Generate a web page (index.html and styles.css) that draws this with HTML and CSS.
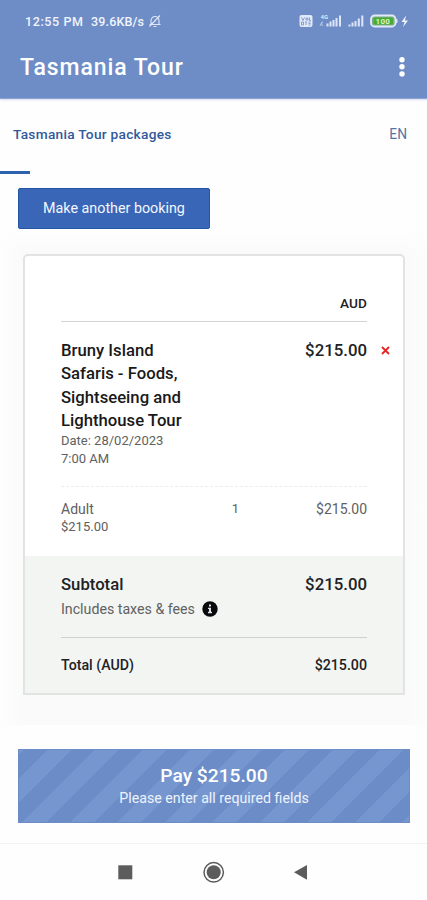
FILE: index.html
```
<!DOCTYPE html>
<html lang="en">
<head>
<meta charset="utf-8">
<meta name="viewport" content="width=device-width, initial-scale=1">
<title>Tasmania Tour</title>
<link rel="stylesheet" href="styles.css">
</head>
<body>
<header class="top">
  <div class="status">
    <span class="clock">12:55 PM</span>
    <span class="speed">39.6KB/s</span>
    <svg class="bell" width="14" height="14" viewBox="0 0 14 14" fill="none" stroke="#dfe7f7" stroke-width="1.1"><path d="M3 10.5V7c0-6 8-6 8 0v3.500M1.500 10.500h11M5.500 12.500h3M1.500 12.500L12 1.500"/></svg>
    <svg class="indicators" width="110" height="14" viewBox="0 0 110 14">
      <rect x="0.500" y="1" width="13" height="12" rx="2" fill="#e1e9f8"/>
      <path d="M2.500 3.500l1.500 3 1.500-3M7 4h2v2H7zM10.500 3.500v3h1.500M2.500 8h2v3h-2zM6 8h2M7 8v3M9.500 8h2M9.500 9.500h2M9.500 11h2" fill="none" stroke="#7a96cd" stroke-width=".9"/>
      <text x="21.500" y="4.500" class="net">4G</text>
      <path d="M21 12l1.500-3 1 3M22 9l2-1" fill="none" stroke="#b9caec" stroke-width="1"/>
      <path d="M28.500 12.500v-3M31.500 12.500v-5M34.500 12.500V6M37.500 12.500V4M41 12.500V1.500M50.500 12.500v-2M53.500 12.500v-4M56.500 12.500V7M59.800 12.500V4.500M63.300 12.500V1.500" stroke="#dce6f8" stroke-width="2"/>
      <path d="M96.500 4.500l2 1v3l-2 1z" fill="#dce6f8"/>
      <rect x="72" y="1.500" width="24.500" height="11" rx="3.500" fill="#7fac8c" stroke="#e1eafa" stroke-width="1.800"/>
      <rect x="74.500" y="3.500" width="19.500" height="7" rx="1.500" fill="#48ac32"/>
      <text x="76.500" y="10" class="charge">100</text>
      <path d="M107 1.500L102.500 8h3l-1.500 5 5-6.500h-3z" fill="#eef3fd"/>
    </svg>
  </div>
  <div class="appbar">
    <h1>Tasmania Tour</h1>
    <svg width="8" height="22" viewBox="0 0 8 22" fill="#fff"><circle cx="4" cy="2.700" r="2.700"/><circle cx="4" cy="9.800" r="2.700"/><circle cx="4" cy="16.900" r="2.700"/></svg>
  </div>
</header>
<nav class="nav">
  <span class="brand">Tasmania Tour packages</span>
  <span class="lang">EN</span>
</nav>
<div class="marker"></div>
<main>
  <button class="again">Make another booking</button>
  <div class="shade">
    <section class="card">
      <div class="items">
        <div class="currency"><span>AUD</span></div>
        <div class="tour">
          <div>
            <h2>Bruny Island<br>Safaris - Foods,<br>Sightseeing and<br>Lighthouse Tour</h2>
            <p class="date">Date: 28/02/2023</p>
            <p class="time">7:00 AM</p>
          </div>
          <strong class="price">$215.00</strong>
          <svg class="remove" width="9" height="9" viewBox="0 0 9 9" stroke="#e32626" stroke-width="1.800"><path d="M1 1l7 7M8 1L1 8"/></svg>
        </div>
        <div class="guest">
          <div><p class="adult">Adult</p><p class="each">$215.00</p></div>
          <span class="count">1</span>
          <span class="amount">$215.00</span>
        </div>
      </div>
      <div class="totals">
        <div class="row"><strong class="subtotal">Subtotal</strong><strong class="price">$215.00</strong></div>
        <div class="taxes"><span>Includes taxes &amp; fees</span>
          <svg width="16" height="16" viewBox="0 0 16 16"><circle cx="8" cy="8" r="7.700" fill="#070b0d"/><path d="M7 3.500h2v2H7zM6 6.700h3v4h1v1.500H6v-1.500h1V8.100H6z" fill="#dfe2e2"/></svg>
        </div>
        <div class="row total"><strong class="total-label">Total (AUD)</strong><strong class="sum">$215.00</strong></div>
      </div>
    </section>
  </div>
  <div class="pay">
    <strong>Pay $215.00</strong>
    <span>Please enter all required fields</span>
  </div>
</main>
<footer class="softkeys">
  <svg width="427" height="56" viewBox="0 0 427 56" fill="#5c5c5c"><rect x="118.300" y="21.300" width="14" height="14"/><circle cx="213.700" cy="28.300" r="9.700" fill="none" stroke="#5c5c5c" stroke-width="1.500"/><circle cx="213.700" cy="28.300" r="7"/><path d="M294 28.300L307 21v14.800z"/></svg>
</footer>
</body>
</html>
```
FILE: styles.css
```
* { box-sizing: border-box; }
body { margin: 0; width: 427px; height: 900px; background: #fefefe; font-family: Roboto, "Liberation Sans", sans-serif; color: #202124; overflow: hidden; display: flex; flex-direction: column; }
h1, h2, p { margin: 0; }
strong { font-weight: 500; }
span, strong { white-space: nowrap; }
.top { height: 99px; flex: none; background: #6e8dc7; color: #fff; border-bottom: 1px solid #8ba3d1; box-shadow: 0 1px 2px #d5dced; }
.status { height: 42px; padding: 0 18px 0 25px; display: flex; align-items: center; font-size: 12.5px; font-weight: 500; color: #f0f4fd; }
.clock { letter-spacing: .6px; width: 66px; }
.speed { letter-spacing: .15px; width: 57px; }
.indicators { margin-left: auto; }
.net { font-size: 6px; font-weight: 700; fill: #dce6f8; }
.charge { font-size: 8px; font-weight: 700; fill: #d8f5cd; letter-spacing: .3px; }
.appbar { height: 52px; padding: 0 21px 0 20px; display: flex; align-items: center; justify-content: space-between; }
h1 { font-size: 23px; line-height: 28px; font-weight: 500; letter-spacing: .92px; }
.nav { height: 72px; flex: none; padding: 0 20px 2px 13px; display: flex; align-items: center; justify-content: space-between; color: #31599c; }
.brand { font-size: 13.7px; font-weight: 500; letter-spacing: .27px; }
.lang { font-size: 13.8px; color: #5474a9; }
.marker { width: 30px; height: 3px; flex: none; background: #2c62ae; }
main { flex: none; height: 669px; display: flex; flex-direction: column; align-items: flex-start; padding: 14px 0 0; }
.again { margin-left: 18px; width: 192px; height: 41px; flex: none; border: 1px solid #2456a2; border-radius: 2px; padding: 0 0 2px; background: #3966b6; color: #f4f7fe; font: 400 14.3px Roboto, sans-serif; }
.shade { width: 427px; flex: none; height: 496px; padding: 25px 22px 31px 23px; background: linear-gradient(180deg, #fefefe, transparent 25px), linear-gradient(90deg, #fefefe, #fafafa 23px, #fafafa 404px, #fdfdfd); }
.card { width: 382px; height: 441px; background: #fff; border: 2px solid #e2e3e3; border-radius: 5px 5px 0 0; display: flex; flex-direction: column; }
.items { height: 300px; padding: 36px 36px 0; }
.currency { height: 30px; border-bottom: 1px solid #d4d4d4; text-align: right; font-size: 13.6px; letter-spacing: .1px; line-height: 23px; font-weight: 500; }
.tour { position: relative; display: flex; justify-content: space-between; height: 165px; padding-top: 17px; border-bottom: 1px dashed #ececec; }
h2 { font-size: 16.7px; line-height: 23.3px; font-weight: 500; color: #191919; }
.price { font-size: 16.8px; line-height: 23px; }
.remove { position: absolute; right: -23px; top: 24px; }
.date, .time, .guest { font-size: 13px; line-height: 18px; color: #606060; }
.guest { display: grid; grid-template-columns: 1fr auto 128px; padding-top: 13px; }
.adult, .amount { font-size: 14px; }
.amount { text-align: right; }
.totals { flex: 1; background: #f3f5f3; padding: 17px 36px 0; }
.row { display: flex; justify-content: space-between; }
.subtotal { font-size: 16.7px; line-height: 23px; }
.taxes { display: flex; align-items: center; gap: 7px; height: 25px; font-size: 14.2px; color: #606261; }
.total { margin-top: 16px; border-top: 1px solid #cfd0cf; padding-top: 17px; font-size: 14.2px; line-height: 20px; }
.pay { width: 392px; height: 74px; flex: none; margin: 24px 0 0 18px; padding-top: 15px; display: flex; flex-direction: column; align-items: center; color: #fff; border: 1px solid #6d8dc6; background: repeating-linear-gradient(135deg, #7596cf 0, #7596cf 3.2px, #6c8cc8 3.2px, #6c8cc8 20px, #7596cf 20px, #7596cf 33.6px); }
.pay strong { font-size: 19.2px; line-height: 22px; }
.pay span { font-size: 14.2px; line-height: 22px; color: #eef3fd; }
.softkeys { flex: none; height: 57px; border-top: 1px solid #f3f3f3; }
```
